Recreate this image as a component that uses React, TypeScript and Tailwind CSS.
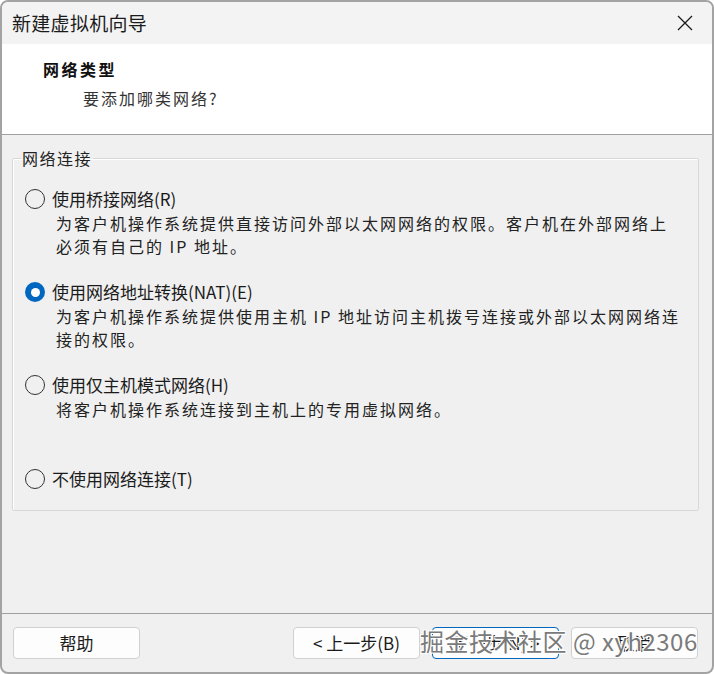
const font = { fontFamily: '"Noto Sans CJK SC", "Noto Sans", sans-serif' };

function Radio({ checked }: { checked?: boolean }) {
  if (checked) {
    return (
      <span className="flex h-[20px] w-[20px] shrink-0 items-center justify-center rounded-full bg-[#0067c0]">
        <span className="h-[9px] w-[9px] rounded-full bg-white" />
      </span>
    );
  }
  return <span className="h-[20px] w-[20px] shrink-0 rounded-full border border-[#333] bg-[#f0f0f0]" />;
}

function Option({
  label,
  lines,
  checked,
  className = "",
}: {
  label: string;
  lines: string[];
  checked?: boolean;
  className?: string;
}) {
  return (
    <div className={className}>
      <label className="flex h-[24px] items-center gap-[7px] text-[17px] text-[#1b1b1b]">
        <Radio checked={checked} />
        <span className="leading-[24px]">{label}</span>
      </label>
      {lines.map((l) => (
        <p key={l} className="ml-[31px] mt-[1px] text-[16px] leading-[22px] tracking-[2px] text-[#222]">
          {l}
        </p>
      ))}
    </div>
  );
}

function Button({ children, focused }: { children: React.ReactNode; focused?: boolean }) {
  return (
    <button
      type="button"
      className={`h-[32px] w-[127px] rounded-[4px] border bg-[#fdfdfd] text-[17px] text-[#1b1b1b] ${
        focused ? "border-[#0067c0]" : "border-[#d0d0d0]"
      }`}
    >
      {children}
    </button>
  );
}

export default function App() {
  return (
    <div style={font} className="h-[674px] w-[714px] bg-white">
      <div className="relative flex h-[674px] w-[714px] flex-col overflow-hidden rounded-[8px] border-2 border-[#a3a3a3] bg-[#f0f0f0]">
        {/* title bar */}
        <div className="flex h-[42px] items-center justify-between bg-[#f3f3f3] pl-[10px] pr-[16px]">
          <span className="text-[19px] tracking-[0.3px] text-[#1b1b1b]">新建虚拟机向导</span>
          <svg width="16" height="16" viewBox="0 0 16 16" className="mr-[3px]">
            <path d="M1 1 L15 15 M15 1 L1 15" stroke="#1b1b1b" strokeWidth="1.3" />
          </svg>
        </div>

        {/* header */}
        <div className="h-[91px] border-b border-[#a0a0a0] bg-white pl-[41px] pt-[13px]">
          <div className="text-[16px] font-bold leading-[24px] tracking-[2.5px] text-[#111]">网络类型</div>
          <div className="ml-[40px] mt-[5px] text-[16px] leading-[24px] tracking-[2px] text-[#333]">
            要添加哪类网络?
          </div>
        </div>

        {/* body */}
        <div className="flex-1 pl-[10px] pr-[13px] pt-[13px]">
          <fieldset className="h-[363px] rounded-[2px] border border-[#d8d8d8] pl-[12px] shadow-[inset_1px_1px_0_#ffffff]">
            <legend className="ml-[-4px] px-[1px] text-[16px] leading-[20px] tracking-[1.5px] text-[#222]">网络连接</legend>
            <Option
              className="mt-[19px]"
              label="使用桥接网络(R)"
              lines={[
                "为客户机操作系统提供直接访问外部以太网网络的权限。客户机在外部网络上",
                "必须有自己的 IP 地址。",
              ]}
            />
            <Option
              className="mt-[23px]"
              checked
              label="使用网络地址转换(NAT)(E)"
              lines={[
                "为客户机操作系统提供使用主机 IP 地址访问主机拨号连接或外部以太网网络连",
                "接的权限。",
              ]}
            />
            <Option
              className="mt-[23px]"
              label="使用仅主机模式网络(H)"
              lines={["将客户机操作系统连接到主机上的专用虚拟网络。"]}
            />
            <Option className="mt-[47px]" label="不使用网络连接(T)" lines={[]} />
          </fieldset>
        </div>

        {/* footer */}
        <div className="flex h-[59px] items-start border-t border-[#a0a0a0] pl-[11px] pr-[14px] pt-[13px]">
          <Button>帮助</Button>
          <div className="ml-auto flex gap-[12px]">
            <Button>&lt; 上一步(B)</Button>
            <Button focused>下一步(N) &gt;</Button>
            <Button>取消</Button>
          </div>
        </div>

        {/* watermark */}
        <div className="pointer-events-none absolute left-[418px] top-[622px] text-[24px] leading-[34px] tracking-[0.5px] text-[#7a7a7a] [text-shadow:1px_1px_0_#fff,-1px_-1px_0_#fff,1px_-1px_0_#fff,-1px_1px_0_#fff]">
          掘金技术社区 @ xyh2306
        </div>
      </div>
    </div>
  );
}
